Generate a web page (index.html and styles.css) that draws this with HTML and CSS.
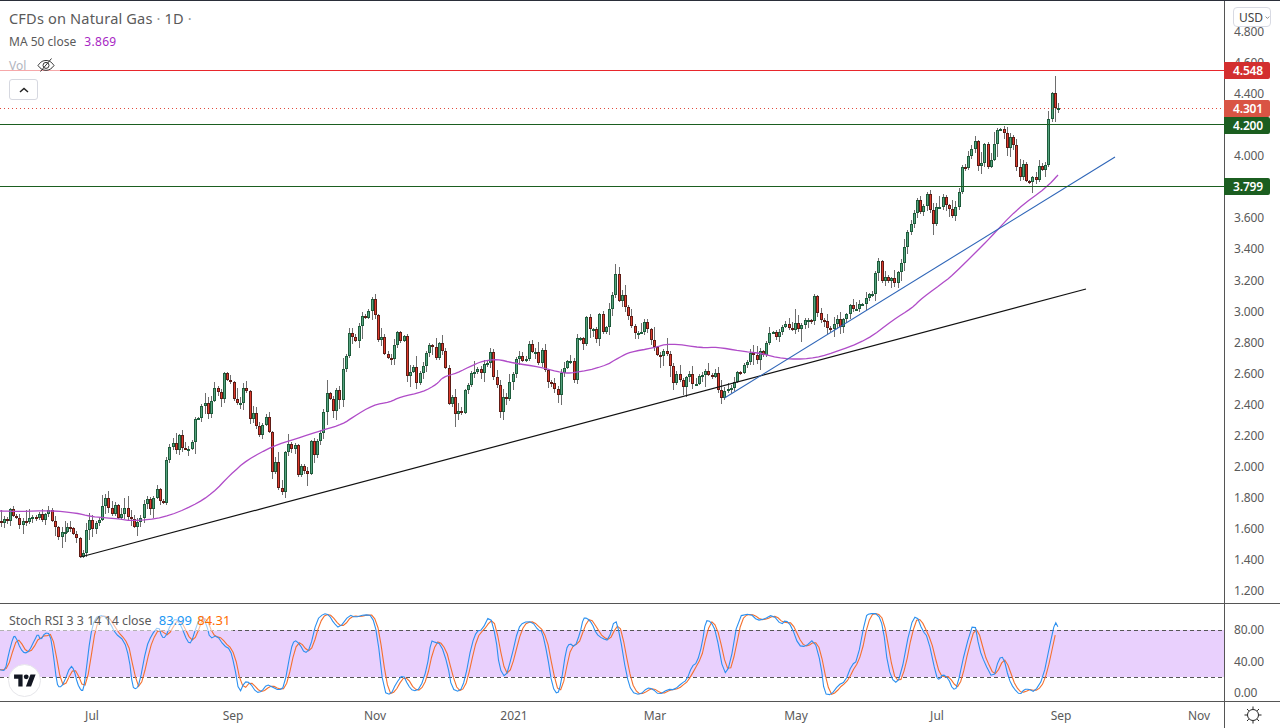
FILE: index.html
```html
<!DOCTYPE html>
<html lang="en">
<head>
<meta charset="utf-8">
<title>CFDs on Natural Gas</title>
<link rel="stylesheet" href="styles.css">
</head>
<body>
<div class="app">
  <div class="topline"></div>

  <section class="pane pane-main">
    <svg class="chart" viewBox="0 1 1224 602" width="1224" height="602" aria-hidden="true">
      <path id="wicks" class="wick"/>
      <path id="green-border" class="green-border"/>
      <path id="red-border" class="red-border"/>
      <path id="green-fill" class="green-fill"/>
      <path id="red-fill" class="red-fill"/>
      <polyline id="ma" class="ma"/>
      <line class="trend-black" x1="80.5" y1="557" x2="1086" y2="289"/>
      <line class="trend-blue" x1="724.5" y1="398" x2="1115" y2="157"/>
      <line class="level-red" x1="0" y1="70.5" x2="1224" y2="70.5"/>
      <line class="level-green" x1="0" y1="124.5" x2="1224" y2="124.5"/>
      <line class="level-green" x1="0" y1="186.5" x2="1224" y2="186.5"/>
      <line class="price-dotted" x1="0" y1="108.5" x2="1222" y2="108.5"/>
    </svg>
    <div class="legend">
      <div class="legend-title">CFDs on Natural Gas <span class="dot">·</span> 1D <span class="dot">·</span></div>
      <div class="legend-ma">MA 50 close <span class="ma-value">3.869</span></div>
      <div class="legend-vol">
        <span class="vol-label">Vol</span>
        <svg class="eye-off" viewBox="0 0 18 14" width="18" height="14" aria-hidden="true">
          <path d="M1 7.500C3.500 3.800 6 2.500 9 2.500s5.500 1.300 8 5c-2.500 3.500-5 4.800-8 4.800S3.500 11 1 7.500z"/>
          <circle cx="9" cy="7.400" r="3"/>
          <path d="M14.500 0.500L3.500 13.500"/>
        </svg>
      </div>
      <button class="collapse" type="button" aria-label="Collapse legend">
        <svg viewBox="0 0 10 6" width="10" height="6" aria-hidden="true"><path d="M1 5l4-3.500L9 5"/></svg>
      </button>
    </div>
  </section>

  <aside class="price-axis">
    <div class="usd">USD<svg viewBox="0 0 8 5" width="8" height="5" aria-hidden="true"><path d="M1 1l3 3 3-3"/></svg></div>
    <ol class="price-list">
      <li>4.800</li><li>4.600</li><li>4.400</li><li>4.200</li><li>4.000</li>
      <li>3.800</li><li>3.600</li><li>3.400</li><li>3.200</li><li>3.000</li>
      <li>2.800</li><li>2.600</li><li>2.400</li><li>2.200</li><li>2.000</li>
      <li>1.800</li><li>1.600</li><li>1.400</li><li>1.200</li>
    </ol>
    <span class="tag tag-red">4.548</span>
    <span class="tag tag-last">4.301</span>
    <span class="tag tag-green tag-420">4.200</span>
    <span class="tag tag-green tag-380">3.799</span>
  </aside>

  <section class="pane pane-stoch">
    <svg class="chart" viewBox="0 604 1224 97" width="1224" height="97" aria-hidden="true">
      <rect class="band" x="0" y="630" width="1224" height="47"/>
      <line class="band-line" x1="0" y1="630" x2="1224" y2="630"/>
      <line class="band-line" x1="0" y1="677" x2="1224" y2="677"/>
      <polyline id="stoch-d" class="stoch-d"/>
      <polyline id="stoch-k" class="stoch-k"/>
    </svg>
    <div class="stoch-legend">Stoch RSI 3 3 14 14 close <span class="k-value">83.99</span> <span class="d-value">84.31</span></div>
    <div class="tv-logo">
      <svg viewBox="0 0 36 28" width="22" height="17" aria-hidden="true">
        <path d="M14 24H7V11H0V4h14v20zM28 24h-8.500L27 4h8.500L28 24z"/>
        <circle cx="20" cy="8" r="4"/>
      </svg>
    </div>
  </section>

  <aside class="stoch-axis">
    <span>80.00</span><span>40.00</span><span>0.00</span>
  </aside>

  <div class="time-axis">
    <span>Jul</span><span>Sep</span><span>Nov</span><span class="year">2021</span><span>Mar</span><span>May</span><span>Jul</span><span>Sep</span><span>Nov</span>
  </div>

  <div class="corner">
    <svg viewBox="0 0 18 18" width="18" height="18" aria-hidden="true">
      <circle cx="9" cy="9" r="5.500"/>
      <path d="M9 0.500v2.500M9 15v2.500M0.500 9h2.500M15 9h2.500M3 3l1.800 1.800M13.200 13.200L15 15M15 3l-1.800 1.800M4.800 13.200L3 15"/>
    </svg>
  </div>
</div>
<script src="chart.js"></script>
</body>
</html>
```
FILE: styles.css
```css
* { box-sizing: border-box; }

html, body {
  margin: 0;
  padding: 0;
  background: #fff;
}

body {
  font-family: "Noto Sans", "Open Sans", sans-serif;
  color: #555;
  overflow: hidden;
}

.app {
  display: grid;
  grid-template-columns: 1224px 56px;
  grid-template-rows: 1px 602px 98px 27px;
  width: 1280px;
  height: 728px;
}

.topline {
  grid-column: 1 / -1;
  background: #2a2e39;
}

.pane { position: relative; overflow: hidden; }
.pane-stoch { border-top: 1px solid #555; }
.chart { display: block; }

/* candles */
.wick { stroke: #6e6e6e; stroke-width: 1; fill: none; shape-rendering: crispEdges; }
.green-border { fill: #1d5c3b; shape-rendering: crispEdges; }
.red-border { fill: #5e1c16; shape-rendering: crispEdges; }
.green-fill { fill: #55a37f; shape-rendering: crispEdges; }
.red-fill { fill: #dd3a2c; shape-rendering: crispEdges; }

.ma { fill: none; stroke: #b04cc8; stroke-width: 1.300; }
.trend-black { stroke: #111; stroke-width: 1.200; }
.trend-blue { stroke: #2f66b8; stroke-width: 1.100; }
.level-red { stroke: #e8272c; stroke-width: 1; shape-rendering: crispEdges; }
.level-green { stroke: #1b5e20; stroke-width: 1; shape-rendering: crispEdges; }
.price-dotted { stroke: #e04a3c; stroke-width: 1; stroke-dasharray: 1 3; shape-rendering: crispEdges; }

/* main legend */
.legend {
  position: absolute;
  top: 0;
  left: 0;
  display: flex;
  flex-direction: column;
  align-items: flex-start;
  padding: 7px 0 0 9px;
}

.legend-title {
  font-size: 14.600px;
  line-height: 20px;
  letter-spacing: 0.150px;
  color: #5a5a5a;
  white-space: nowrap;
}

.dot { color: #999; }

.legend-ma {
  margin-top: 5px;
  font-size: 12px;
  line-height: 18px;
  color: #5a5a5a;
  white-space: nowrap;
}

.ma-value { margin-left: 5px; letter-spacing: 0.300px; color: #a727c4; }

.legend-vol {
  display: flex;
  align-items: center;
  gap: 11px;
  margin: 5px 0 0 -9px;
  padding-left: 9px;
  padding-right: 5px;
  height: 18px;
  background: rgba(255, 255, 255, 0.6);
  font-size: 12px;
  color: #b2b5be;
}

.eye-off { fill: none; stroke: #333; stroke-width: 1; }

.collapse {
  display: flex;
  align-items: center;
  justify-content: center;
  width: 29px;
  height: 21px;
  margin-top: 5px;
  padding: 0;
  background: #fff;
  border: 1px solid #d6d8e0;
  border-radius: 3px;
}

.collapse svg { fill: none; stroke: #222; stroke-width: 1.500; }

/* price axis */
.price-axis {
  position: relative;
  border-left: 1px solid #555;
}

.price-list {
  list-style: none;
  margin: 0;
  padding: 15px 0 0 9px;
  font-size: 12px;
  line-height: 31.060px;
  letter-spacing: -0.150px;
  color: #5a5a5a;
}

.usd {
  position: absolute;
  z-index: 3;
  top: 6px;
  left: 8px;
  display: flex;
  align-items: center;
  gap: 2px;
  width: 38px;
  height: 20px;
  padding-left: 5px;
  background: #fff;
  border: 1px solid #d8dae3;
  border-radius: 4px;
  font-size: 12px;
  color: #444;
}

.usd svg { fill: none; stroke: #444; stroke-width: 1; }

.tag {
  position: absolute;
  z-index: 2;
  left: -1px;
  width: 46px;
  height: 17px;
  padding-left: 9px;
  border-radius: 0 2px 2px 0;
  font-size: 12px;
  font-weight: 600;
  line-height: 17px;
  letter-spacing: -0.150px;
  color: #fff;
}

.tag-red { top: 61px; background: #d32f2f; }
.tag-last { top: 99px; background: #d95444; }
.tag-green { background: #1b5e20; }
.tag-420 { top: 116px; }
.tag-380 { top: 177px; }

/* stochastic pane */
.band { fill: #e9d0fd; }
.band-line { stroke: #555; stroke-width: 1; stroke-dasharray: 4 3; shape-rendering: crispEdges; }
.stoch-k { fill: none; stroke: #2b90f0; stroke-width: 1.100; }
.stoch-d { fill: none; stroke: #f4702f; stroke-width: 1.100; }

.stoch-legend {
  position: absolute;
  top: 6px;
  left: 0;
  height: 21px;
  padding: 0 3px 0 9px;
  background: rgba(255, 255, 255, 0.55);
  font-size: 12.400px;
  line-height: 20px;
  color: #5a5a5a;
  white-space: nowrap;
}

.k-value { margin-left: 4px; font-size: 13px; color: #2196f3; }
.d-value { margin-left: 2px; font-size: 13px; color: #ff6d00; }

.tv-logo {
  position: absolute;
  top: 60px;
  left: 8px;
  display: flex;
  align-items: center;
  justify-content: center;
  width: 33px;
  height: 33px;
  background: #fff;
  border: 1px solid #e6e6ea;
  border-radius: 50%;
}

.tv-logo svg { fill: #131722; }

.stoch-axis {
  position: relative;
  display: flex;
  flex-direction: column;
  gap: 13.500px;
  padding: 17px 0 0 9px;
  border-left: 1px solid #555;
  border-top: 1px solid #555;
  font-size: 12px;
  line-height: 18px;
  letter-spacing: -0.150px;
  color: #5a5a5a;
}

/* time axis */
.time-axis {
  display: grid;
  grid-template-columns: 92px 141px 142px 139px 141px 141px 141px 124px 138px;
  align-items: center;
  border-top: 1px solid #555;
  font-size: 12px;
  color: #5a5a5a;
}

.time-axis span {
  justify-self: end;
  transform: translateX(50%);
}

.corner {
  display: flex;
  align-items: center;
  justify-content: center;
  border-left: 1px solid #555;
  border-top: 1px solid #555;
}

.corner svg { fill: none; stroke: #222; stroke-width: 1; }
```
FILE: chart.js
```js
(function () {
  // x:close pairs; every candle opens at the previous close.
  var segments = [
    { base: 0, scale: 1, open: 521, data: "1:523 4:519 7:521 10:509 13:516 16:518 19:525 23:521 26:522 29:518 32:517 36:518 39:514 42:520 45:514 48:510 52:521 55:527 58:537 62:532 65:532 67:527 70:528 73:534 76:538" },
    { base: 60, scale: 3, data: "62:557 70:553 79:530 88:520 97:529 108:523 118:520 127:506 136:498 145:508 157:514 166:505 175:518 184:514 193:508 205:517 214:519 223:527 232:522 241:518 253:504 262:499 271:509 280:498 293:489 301:501 310:503 319:460 328:447 341:443 349:450 358:435 367:448 376:449 385:449 397:442 406:419 415:418 424:406 437:403 445:414 454:401 463:388 475:392 484:399 493:373 502:380 511:382 523:399 532:403 541:403 550:388 559:391 571:419 580:413 589:426 598:435 607:425 619:417 628:432 637:472 646:462 655:488 667:492 676:452 685:444 694:449 706:445 715:475" },
    { base: 270, scale: 3, data: "94:466 103:471 112:474 124:441 133:455 142:441 151:433" },
    { base: 280, scale: 3, data: "130:412 143:393 152:399 161:411 170:390 179:400 190:369 199:356 208:333 217:337 226:341 238:326 247:316 256:318 265:311 277:299 286:315 295:340 304:337 313:354 325:358 334:359 343:345 352:332 361:341 373:336 382:376 391:372 400:367 409:383 421:373 430:366 439:353 448:345 457:347 469:358 478:343 487:351 496:368 508:404 517:397 526:414 535:411 544:413 556:390 565:385 574:373 583:372 592:369 604:373 613:364 622:363 631:352 640:377 652:385 661:412 670:397 679:399 688:382 700:374 709:359 718:356" },
    { base: 520, scale: 3, data: "7:361 19:359 28:344 37:352 46:352 55:363 67:350 76:370 85:382 94:383 103:389 115:395 124:373 133:368 142:361 151:361 163:380 172:338 181:338 190:344 199:317 211:329 220:329 229:339 238:314 250:332 259:327 268:309 277:295 286:274 298:301 307:295 316:307 325:316 334:326 346:333 355:333 364:332 373:322 382:329 394:340 403:347 412:355 421:356 430:351 442:354 451:366 460:383 469:374 481:380 490:387 499:377 508:374 517:384 529:384 538:376 547:375 556:371 565:375 577:377 586:373 595:390 604:398 613:391 625:389 634:388 643:382 652:372" },
    { base: 740, scale: 3, data: "1:373 13:365 22:362 31:353 40:355 52:360 61:351 70:355 79:343 88:333 100:332 109:337 118:332 127:327 136:324 148:328 157:330 166:323 175:329 184:325 196:320 205:320 214:321 223:296 232:313 244:320 253:321 262:328 271:329 283:324 292:319 301:327 310:319 319:314 331:305 340:309 349:309 358:304 367:304 379:298 388:294 397:294 406:273 415:261 427:281 436:277 445:281 454:278 463:283 475:272 484:263 493:247" },
    { base: 900, scale: 3, data: "22:232 34:224 43:213 52:200 61:212 70:206 82:194 91:210 100:224 109:207 118:207 130:197 139:205 148:209 157:216 166:207 178:192 187:167 196:168 205:156 214:149 226:141 235:166 244:163 253:144 265:167 274:160 283:144 292:130 301:129 313:133 322:148 331:137 340:145 349:167 361:177 370:164 379:181 388:182 397:177 409:180 418:166 427:170 436:165 445:119 457:93 466:108 475:108" }
  ];

  // Wicks of the extreme candles, read from the reference.
  var wickOverride = {
    80: [537, 558],
    372: [297, 320],
    615: [264, 298],
    722: [386, 400],
    1052: [92, 122],
    1055: [76, 122],
    1058: [103, 113]
  };

  var seed = 20210831;
  function rand() {
    seed = (seed * 1664525 + 1013904223) % 4294967296;
    return seed / 4294967296;
  }

  var prev = segments[0].open;
  var wicks = "", gb = "", rb = "", gf = "", rf = "";

  segments.forEach(function (seg) {
    seg.data.split(" ").forEach(function (pair) {
      var parts = pair.split(":");
      var col = Math.floor(seg.base + Number(parts[0]) / seg.scale);
      var close = Number(parts[1]);
      var open = prev;
      var up = close <= open;
      var top = Math.min(open, close);
      var bottom = Math.max(open, close);
      var hi = top - Math.round(rand() * rand() * 14 + 1);
      var lo = bottom + Math.round(rand() * rand() * 14 + 1);
      if (wickOverride[col]) {
        hi = wickOverride[col][0];
        lo = wickOverride[col][1];
      }
      wicks += "M" + (col + 0.5) + " " + hi + "V" + lo;

      var h = Math.max(bottom - top, 2);
      var border = "M" + (col - 1) + " " + top + "h3v" + h + "h-3z";
      if (up) { gb += border; } else { rb += border; }
      if (h > 2) {
        var fill = "M" + col + " " + (top + 1) + "h1v" + (h - 2) + "h-1z";
        if (up) { gf += fill; } else { rf += fill; }
      }
      prev = close;
    });
  });

  document.getElementById("wicks").setAttribute("d", wicks);
  document.getElementById("green-border").setAttribute("d", gb);
  document.getElementById("red-border").setAttribute("d", rb);
  document.getElementById("green-fill").setAttribute("d", gf);
  document.getElementById("red-fill").setAttribute("d", rf);

  // Corner-cutting, to round off the traced polylines.
  function chaikin(points, passes) {
    var out = points;
    for (var n = 0; n < passes; n++) {
      var next = [out[0]];
      for (var i = 0; i < out.length - 1; i++) {
        var a = out[i], b = out[i + 1];
        next.push([a[0] * 0.75 + b[0] * 0.25, a[1] * 0.75 + b[1] * 0.25]);
        next.push([a[0] * 0.25 + b[0] * 0.75, a[1] * 0.25 + b[1] * 0.75]);
      }
      next.push(out[out.length - 1]);
      out = next;
    }
    return out;
  }

  function toPoints(list) {
    return list.map(function (p) {
      return p[0].toFixed(1) + "," + p[1].toFixed(1);
    }).join(" ");
  }

  var ma = [[0,511],[20,511.5],[50,510.5],[77,513],[90,516.5],[120,519],[133,521],[163,518],[193,506],[213,493],[230,475],[247,460],[273,446],[295,439],[323,430],[343,424],[353,417],[373,405],[390,402],[400,397],[423,392],[437,384],[443,377],[457,373],[473,365],[483,361],[497,359],[513,363],[540,367],[563,373],[573,373],[603,367],[620,357],[630,352],[653,348],[670,343],[702,348],[717,347],[740,351],[760,353],[783,359],[810,359],[833,353],[867,340],[893,320],[912,308],[922,298],[947,280],[960,268],[980,248],[988,240],[1017,209],[1047,187],[1058,175]];
  document.getElementById("ma").setAttribute("points", toPoints(chaikin(ma, 2)));

  // Stochastic %K, read from the reference; %D is its three-bar mean.
  var scaleX = 2.904;
  var kRaw = [
    [0,185],[15,188],[25,140],[38,90],[45,88],[60,125],[72,138],[85,130],[100,100],[110,80],[118,100],[130,78],[145,80],[155,140],[165,225],[173,238],[185,225],[205,172],[215,185],[225,225],[235,245],[242,245],[250,190],[262,90],[275,35],[300,25],[320,50],[335,80],[360,100],[375,150],[385,235],[395,242],[405,225],[425,120],[440,85],[460,58],[470,90],[480,92],[495,55],[510,35],[525,55],[545,105],[555,108],[570,60],[585,22],[600,55],[610,95],[630,85],[650,115],[668,125],[680,170],[695,255],[710,220],[725,222],[745,252],[760,248],[775,228],[790,235],[810,245],[825,235],[845,125],[855,98],[870,110],[885,138],[900,125],[920,40],[940,22],[955,25],[970,50],[985,65],[1015,25],[1030,33],[1060,25],[1080,28],[1095,80],[1115,250],[1135,258],[1150,225],[1170,198],[1185,230],[1200,248],[1220,240],[1240,180],[1252,100],[1262,105],[1280,110],[1300,170],[1312,240],[1335,250],[1350,215],[1370,110],[1385,72],[1400,70],[1422,25],[1440,90],[1450,180],[1468,210],[1485,150],[1505,65],[1520,47],[1545,45]
  ];
  var kRaw2 = [
    [25,72],[35,72],[50,140],[65,235],[80,258],[90,225],[105,125],[115,108],[130,120],[145,80],[155,35],[165,35],[180,50],[192,80],[210,95],[228,100],[247,35],[260,80],[280,200],[295,250],[320,258],[340,238],[355,240],[375,258],[400,242],[420,243],[440,225],[455,215],[470,175],[485,165],[500,110],[510,42],[525,45],[540,75],[563,200],[580,175],[605,30],[640,22],[660,42],[680,38],[705,25],[730,55],[742,40],[760,60],[780,115],[800,118],[825,95],[845,170],[855,255],[875,258],[895,230],[915,220],[935,170],[950,160],[975,30],[985,22],[1010,22],[1025,60],[1040,180],[1058,225],[1075,210],[1105,55],[1122,25],[1140,72],[1155,90],[1180,205],[1188,215],[1198,198],[1215,210],[1228,243],[1240,238],[1265,120],[1290,42],[1305,125],[1320,165],[1345,213],[1362,152],[1375,148],[1390,210],[1405,240],[1423,258],[1435,242],[1450,242],[1465,250],[1490,210],[1510,110],[1525,45],[1533,60]
  ];

  var k = kRaw.map(function (p) { return [p[0] / scaleX, 606 + p[1] / scaleX]; })
    .concat(kRaw2.map(function (p) { return [530 + p[0] / scaleX, 606 + p[1] / scaleX]; }));

  function yAt(x) {
    if (x <= k[0][0]) { return k[0][1]; }
    for (var i = 1; i < k.length; i++) {
      if (x <= k[i][0]) {
        var t = (x - k[i - 1][0]) / (k[i][0] - k[i - 1][0]);
        return k[i - 1][1] + t * (k[i][1] - k[i - 1][1]);
      }
    }
    return k[k.length - 1][1];
  }

  document.getElementById("stoch-k").setAttribute("points", toPoints(chaikin(k, 1)));

  var d = [];
  for (var x = 0; x <= 1058; x += 3.15) {
    d.push([x, (yAt(x) + yAt(x - 3.15) + yAt(x - 6.3)) / 3]);
  }
  document.getElementById("stoch-d").setAttribute("points", toPoints(d));
})();
```
